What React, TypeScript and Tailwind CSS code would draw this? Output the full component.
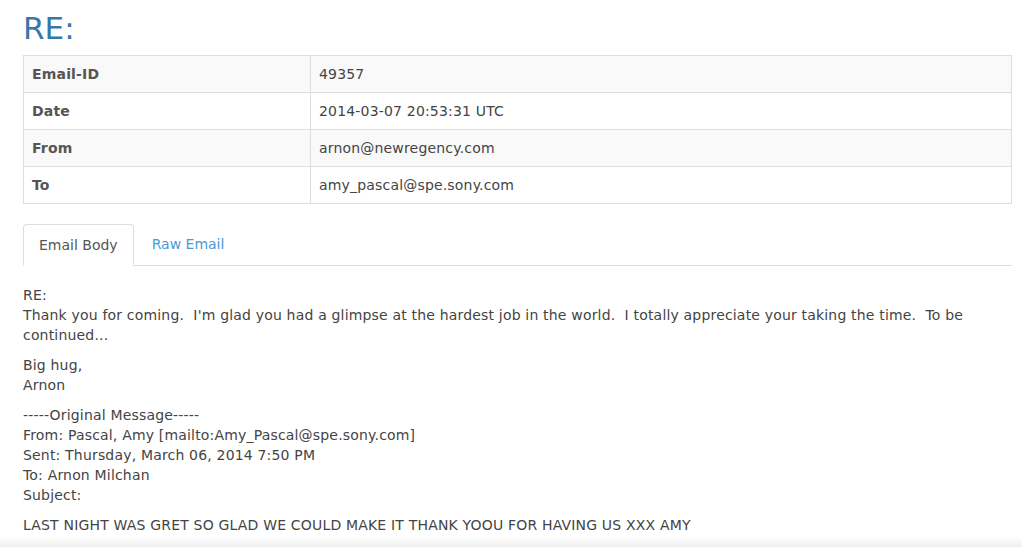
import React from 'react'

/*
  Email detail view: subject heading, metadata table, tabs, body.
*/

const META = [
  ['Email-ID', '49357'],
  ['Date', '2014-03-07 20:53:31 UTC'],
  ['From', 'arnon@newregency.com'],
  ['To', 'amy_pascal@spe.sony.com'],
]

export default function App() {
  return (
    <div className="relative min-h-[547px] bg-white font-['DejaVu_Sans',Verdana,sans-serif] text-[14px] leading-[20px] tracking-[0.18px] text-[#444]">
      <div className="px-[23px] pt-[10px] pr-[10px]">
        <h1 className="text-[31px] leading-[36px] font-normal tracking-normal text-[#3679a9]">RE:</h1>

        <table className="mt-[9px] w-full border-collapse border border-[#ddd]">
          <tbody>
            {META.map(([label, value], i) => (
              <tr key={label} className={i % 2 === 0 ? 'bg-[#f9f9f9]' : 'bg-white'}>
                <td className="w-[287px] border border-[#ddd] px-[8px] py-[8px] font-bold text-[#555]">{label}</td>
                <td className="border border-[#ddd] px-[8px] py-[8px]">{value}</td>
              </tr>
            ))}
          </tbody>
        </table>

        {/* tabs ----------------------------------------------------------- */}
        <div className="mt-[20px] flex border-b border-[#ddd]">
          <div className="-mb-px rounded-t-[4px] border border-[#ddd] border-b-white bg-white px-[15px] py-[10px] tracking-normal text-[#555]">
            Email Body
          </div>
          <div className="px-[18px] py-[10px] tracking-normal text-[#4a9ad6]">Raw Email</div>
        </div>

        {/* body ----------------------------------------------------------- */}
        <div className="mt-[19px] whitespace-pre-wrap">
          <p>
            {'RE:\nThank you for coming.  I\'m glad you had a glimpse at the hardest job in the world.  I totally appreciate your taking the time.  To be continued...'}
          </p>
          <p className="mt-[10px]">{'Big hug,\nArnon'}</p>
          <p className="mt-[10px]">
            {'-----Original Message-----\nFrom: Pascal, Amy [mailto:Amy_Pascal@spe.sony.com]\nSent: Thursday, March 06, 2014 7:50 PM\nTo: Arnon Milchan\nSubject:'}
          </p>
          <p className="mt-[10px]">LAST NIGHT WAS GRET SO GLAD WE COULD MAKE IT THANK YOOU FOR HAVING US XXX AMY</p>
        </div>
      </div>

      {/* faint shade along the bottom edge */}
      <div className="pointer-events-none absolute inset-x-0 bottom-0 h-[10px] bg-gradient-to-b from-white/0 to-[#efefef]" />
    </div>
  )
}
